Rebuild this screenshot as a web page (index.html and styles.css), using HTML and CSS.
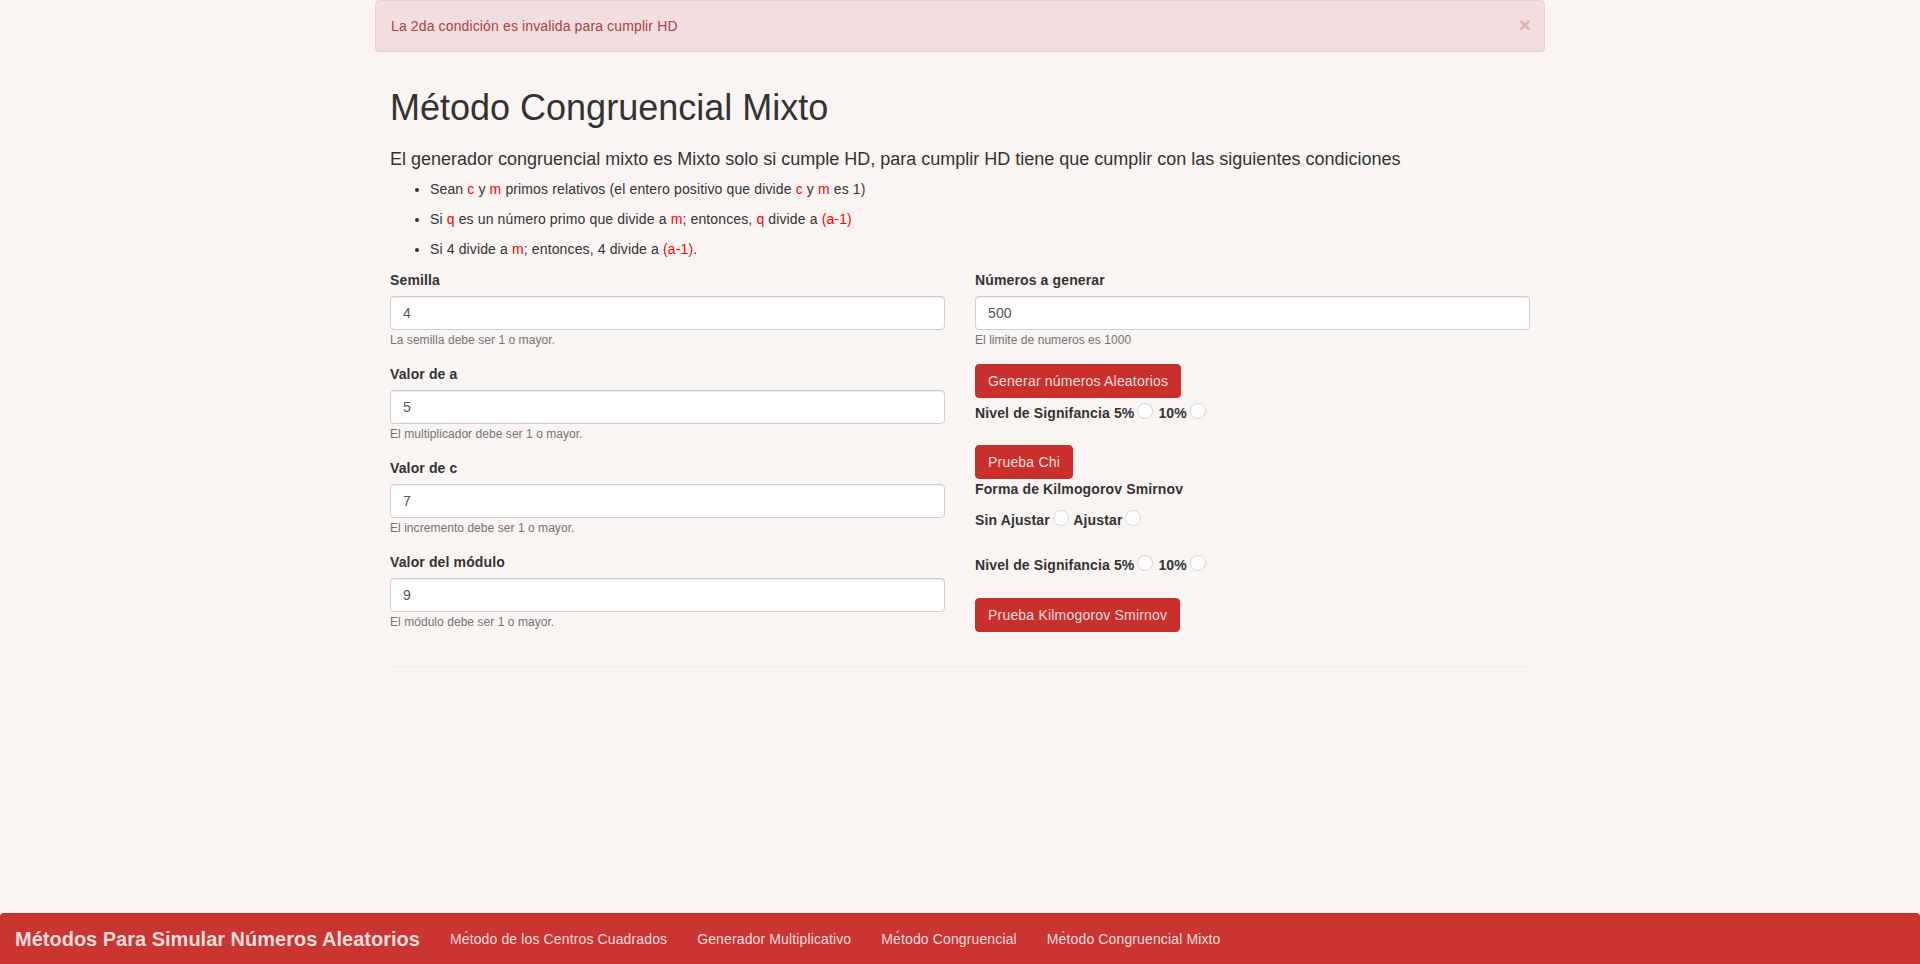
FILE: index.html
```html
<!DOCTYPE html>
<html lang="es">
<head>
<meta charset="utf-8">
<title>Método Congruencial Mixto</title>
<link rel="stylesheet" href="styles.css">
</head>
<body>
<div class="page">
  <div class="alert-wrap">
    <div class="alert">
      <span>La 2da condición es invalida para cumplir HD</span>
      <button class="close" type="button">×</button>
    </div>
  </div>
  <div class="container">
    <h1 class="title">Método Congruencial Mixto</h1>
    <p class="lead">El generador congruencial mixto es Mixto solo si cumple HD, para cumplir HD tiene que cumplir con las siguientes condiciones</p>
    <ul class="conds">
      <li>Sean <span class="v">c</span> y <span class="v">m</span> primos relativos (el entero positivo que divide <span class="v">c</span> y <span class="v">m</span> es 1)</li>
      <li>Si <span class="v">q</span> es un nu&#8204;&#769;mero primo que divide a <span class="v">m</span>; entonces, <span class="v">q</span> divide a <span class="v">(a-1)</span></li>
      <li>Si 4 divide a <span class="v">m</span>; entonces, 4 divide a <span class="v">(a-1)</span>.</li>
    </ul>
    <div class="row">
      <div class="col">
        <div class="form-group">
          <label class="label">Semilla</label>
          <input class="input" type="text" value="4">
          <div class="help">La semilla debe ser 1 o mayor.</div>
        </div>
        <div class="form-group">
          <label class="label">Valor de a</label>
          <input class="input" type="text" value="5">
          <div class="help">El multiplicador debe ser 1 o mayor.</div>
        </div>
        <div class="form-group">
          <label class="label">Valor de c</label>
          <input class="input" type="text" value="7">
          <div class="help">El incremento debe ser 1 o mayor.</div>
        </div>
        <div class="form-group">
          <label class="label">Valor del módulo</label>
          <input class="input" type="text" value="9">
          <div class="help">El módulo debe ser 1 o mayor.</div>
        </div>
      </div>
      <div class="col">
        <div class="form-group">
          <label class="label">Números a generar</label>
          <input class="input" type="text" value="500">
          <div class="help">El limite de numeros es 1000</div>
        </div>
        <div class="btn-line"><button class="btn" type="button">Generar números Aleatorios</button></div>
        <div class="opt-line sig1">Nivel de Signifancia 5%<input class="radio" type="radio" name="s1"> 10%<input class="radio" type="radio" name="s1"></div>
        <div class="btn-line chi"><button class="btn" type="button">Prueba Chi</button></div>
        <div class="opt-line">Forma de Kilmogorov Smirnov</div>
        <div class="opt-line forma">Sin Ajustar<input class="radio" type="radio" name="f"> Ajustar<input class="radio" type="radio" name="f"></div>
        <div class="opt-line sig2">Nivel de Signifancia 5%<input class="radio" type="radio" name="s2"> 10%<input class="radio" type="radio" name="s2"></div>
        <div class="btn-line ks"><button class="btn" type="button">Prueba Kilmogorov Smirnov</button></div>
      </div>
    </div>
    <hr class="rule">
  </div>
</div>
<nav class="navbar">
  <a class="brand" href="#">Métodos Para Simular Números Aleatorios</a>
  <a class="nav-link" href="#">Me&#8204;&#769;todo de los Centros Cuadrados</a>
  <a class="nav-link" href="#">Generador Multiplicativo</a>
  <a class="nav-link" href="#">Me&#8204;&#769;todo Congruencial</a>
  <a class="nav-link" href="#">Me&#8204;&#769;todo Congruencial Mixto</a>
</nav>
</body>
</html>
```
FILE: styles.css
```css
* { box-sizing: border-box; }

html, body { margin: 0; padding: 0; }

body {
  background: #faf5f3;
  color: #333;
  font-family: "Liberation Sans", Arial, Helvetica, sans-serif;
  font-size: 14px;
  line-height: 20px;
  letter-spacing: 0.13px;
  min-height: 100vh;
  display: flex;
  flex-direction: column;
}

.page { flex: 1; }

.alert-wrap {
  width: 1170px;
  margin: 0 auto;
}

.alert {
  display: flex;
  justify-content: space-between;
  align-items: flex-start;
  background: #f2dede;
  border: 1px solid #ebccd1;
  color: #a94442;
  border-radius: 4px;
  padding: 15px;
  line-height: 20px;
}

.close {
  background: none;
  border: 0;
  padding: 0;
  margin: -2px -2px 0 0;
  font-family: inherit;
  font-size: 21px;
  font-weight: bold;
  line-height: 21px;
  color: #a94442;
  opacity: 0.3;
  cursor: pointer;
}

.container {
  width: 1170px;
  margin: 0 auto;
  padding: 0 15px;
}

.title {
  font-size: 36px;
  font-weight: normal;
  line-height: 39.6px;
  letter-spacing: 0;
  margin: 36px 0 22px;
  color: #333;
}

.lead {
  font-size: 18px;
  line-height: 19.8px;
  letter-spacing: 0;
  margin: 0 0 10px;
}

.conds {
  margin: 0 0 11px;
  padding-left: 40px;
}

.conds li {
  line-height: 20px;
  margin-bottom: 10px;
}

.v { color: #ff0000; }

.row {
  display: grid;
  grid-template-columns: 1fr 1fr;
  column-gap: 30px;
  align-items: start;
}

.form-group {
  margin-bottom: 15px;
}

.label {
  display: block;
  font-weight: bold;
  line-height: 20px;
  margin-bottom: 6px;
}

.input {
  display: block;
  width: 100%;
  height: 34px;
  padding: 6px 12px;
  font-family: inherit;
  font-size: 14px;
  line-height: 20px;
  letter-spacing: 0.13px;
  color: #555;
  background: #fff;
  border: 1px solid #ccc;
  border-radius: 4px;
  box-shadow: inset 0 1px 1px rgba(0, 0, 0, 0.075);
}

.help {
  margin-top: 2px;
  font-size: 12px;
  line-height: 17px;
  letter-spacing: 0.05px;
  color: #737373;
}

.btn-line { line-height: 0; }

.btn {
  display: inline-block;
  height: 34px;
  padding: 6px 12px;
  font-family: inherit;
  font-size: 14px;
  line-height: 20px;
  letter-spacing: 0.2px;
  color: #f4dede;
  background: #c9302c;
  border: 1px solid #c12e2a;
  border-radius: 4px;
  cursor: pointer;
}

.opt-line {
  font-weight: bold;
  line-height: 20px;
}

.radio {
  -webkit-appearance: none;
  appearance: none;
  display: inline-block;
  width: 16px;
  height: 16px;
  margin: 0 1px 0 3px;
  padding: 0;
  border: 1px solid #d6d6d6;
  border-radius: 50%;
  background: #fff;
  vertical-align: -1px;
}

.sig1 { margin-top: 5px; }
.chi { margin-top: 22px; }
.forma { margin-top: 11px; }
.sig2 { margin-top: 25px; }
.ks { margin-top: 23px; }

.rule {
  margin: 20px 0 0;
  border: 0;
  border-top: 1px solid #eee;
}

.navbar {
  display: flex;
  align-items: stretch;
  height: 51px;
  background: #ca3431;
  border-top: 1px solid #c2302d;
  border-radius: 4px 4px 0 0;
}

.brand {
  padding: 15px;
  font-size: 20px;
  font-weight: bold;
  line-height: 20px;
  letter-spacing: 0;
  color: #f2dede;
  text-decoration: none;
}

.nav-link {
  padding: 15px;
  font-size: 14px;
  line-height: 20px;
  color: #f2dede;
  text-decoration: none;
}
```
